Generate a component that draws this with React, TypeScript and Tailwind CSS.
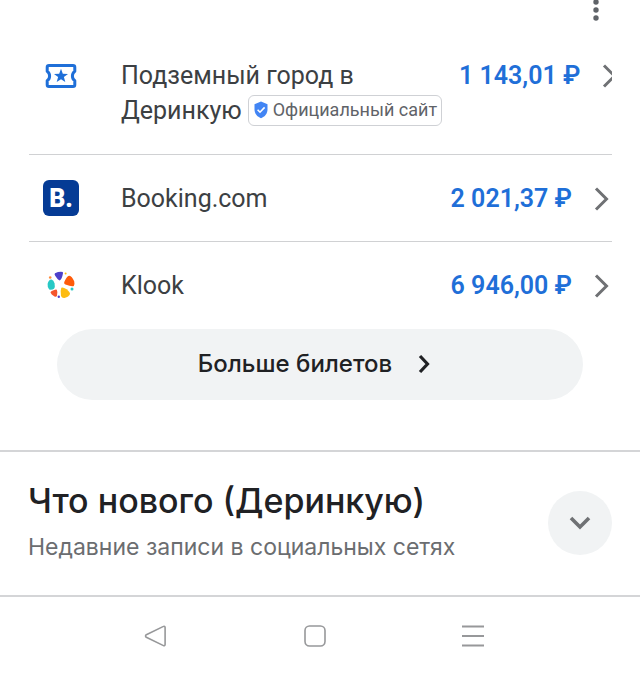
import React from "react";
import clsx from "clsx";

interface TicketOffer {
  id: string;
  name: string;
  price: string;
  official?: boolean;
  icon: React.ReactNode;
}

const TicketIcon = () => (
  <svg width="32" height="26" viewBox="0 0 32 26" fill="none" aria-hidden="true">
    <path
      d="M4 2.5h24a1.8 1.8 0 0 1 1.8 1.8v3.900a6 6 0 0 0 0 9.600v3.900a1.8 1.8 0 0 1-1.8 1.8H4a1.8 1.8 0 0 1-1.8-1.8v-3.900a6 6 0 0 0 0-9.600V4.300A1.8 1.8 0 0 1 4 2.5z"
      stroke="#1f6fd8"
      strokeWidth="3"
      strokeLinejoin="round"
    />
    <path
      d="M16 5.8l1.800 4.900 5.200.2-4.100 3.200 1.400 5-4.300-2.900-4.300 2.900 1.400-5L9 10.900l5.200-.2z"
      fill="#1f6fd8"
    />
  </svg>
);

const BookingIcon = () => (
  <span className="flex h-9 w-9 items-center justify-center rounded-md bg-[#053b95] text-[25px] leading-none font-black text-white">
    B.
  </span>
);

const KlookIcon = () => (
  <svg width="28" height="28" viewBox="0 0 28 28" aria-hidden="true">
    <path d="M8 2.200Q12 .4 15.800 1Q16.400 2 15.400 5Q14 9.400 12.600 9.400Q11.200 9.300 8.200 4.800Q7 2.800 8 2.200z" fill="#4d40ca" />
    <path d="M22.500 4.800Q24.800 5.200 27.200 10.300Q28 14 26.800 15Q25 16 18.400 13.600Q16.400 12.500 17.600 10.200Q20.300 4.700 22.500 4.800z" fill="#ff5b0a" />
    <path d="M4.500 8.400Q6.700 9 7.600 12.500Q8.300 16 7 17.800Q5.400 19 2.200 18.600Q.3 17 .6 13Q1.700 8.100 4.500 8.400z" fill="#27c8c5" />
    <path d="M14.300 16.700Q15.700 15.600 19.700 18.300Q23.200 21.500 23 23Q22 25.900 17.500 26.900Q14.800 27.200 14 25Q13 20 14.300 16.700z" fill="#fdbc12" />
    <path d="M4.800 20Q8.700 17.800 9.800 18.700Q10.900 20.500 10 24.700Q9.400 26.300 7.500 25.500Q4 23.500 3.500 21.600Q3.600 20.500 4.800 20z" fill="#f4552c" />
    <circle cx="3.2" cy="6.5" r="1.3" fill="#ff8a3c" />
    <circle cx="18.6" cy="2.5" r="1" fill="#fdbc12" />
    <circle cx="25" cy="18" r="1.5" fill="#27c8c5" />
    <circle cx="11.8" cy="25.8" r="1.2" fill="#4d40ca" />
  </svg>
);

const ShieldIcon = () => (
  <svg width="14" height="18" viewBox="0 0 14 18" fill="none" className="shrink-0" aria-hidden="true">
    <path d="M7 .5l6.500 2.700v5.300c0 4-2.700 7.400-6.500 8.700C3.200 15.900.5 12.500.5 8.500V3.200z" fill="#4285f4" />
    <path d="M3.600 8.800l2.400 2.400 4.600-4.800" stroke="#fff" strokeWidth="1.6" />
  </svg>
);

const offers: TicketOffer[] = [
  {
    id: "derinkuyu",
    name: "Подземный город в Деринкую",
    price: "1 143,01 ₽",
    official: true,
    icon: <TicketIcon />,
  },
  { id: "booking", name: "Booking.com", price: "2 021,37 ₽", icon: <BookingIcon /> },
  { id: "klook", name: "Klook", price: "6 946,00 ₽", icon: <KlookIcon /> },
];

const OfferRow = ({ offer, last }: { offer: TicketOffer; last: boolean }) => (
  <li className={clsx("overflow-hidden", !last && "border-b border-[#d0d1d3]")}>
    <a
      href={`#${offer.id}`}
      className={clsx(
        "flex items-start pt-[26px] text-[25px] leading-[35px]",
        offer.official ? "pb-6" : "pb-[25px]"
      )}
    >
      <span className="flex h-[35px] w-16 shrink-0 items-center justify-center">{offer.icon}</span>
      <span className={clsx("ml-7 grow text-[#3c4043]", offer.official && "w-[322px] shrink-0")}>
        {offer.name}
        {offer.official && (
          <span className="mb-1 ml-1.5 inline-flex h-[31px] items-center gap-[5px] rounded-md border border-[#cfd1d5] pr-1 pl-[5px] align-middle text-lg leading-none whitespace-nowrap text-[#5f6368]">
            <ShieldIcon />
            Официальный сайт
          </span>
        )}
      </span>
      <span className="ml-4 shrink-0 font-semibold whitespace-nowrap text-[#1f6fd8]">
        {offer.price}
      </span>
      <svg
        width="16"
        height="35"
        viewBox="0 0 16 35"
        fill="none"
        className="mr-0.5 ml-[22px] shrink-0"
        aria-hidden="true"
      >
        <path d="M2 7.5l10.500 10.500L2 28.500" stroke="#6f7174" strokeWidth="3" />
      </svg>
    </a>
  </li>
);

const App = () => {
  return (
    <div className="min-h-screen w-full bg-white font-[Roboto,sans-serif]">
      <header className="flex h-8 justify-end pr-10">
        <button type="button" aria-label="Ещё" className="flex h-[22px] w-2 items-start">
          <svg width="8" height="22" viewBox="0 0 8 22" fill="#5f6368" aria-hidden="true">
            <circle cx="4" cy="2" r="2.7" />
            <circle cx="4" cy="10" r="2.7" />
            <circle cx="4" cy="18" r="2.7" />
          </svg>
        </button>
      </header>

      <main>
        <ul className="mr-7 ml-[29px]">
          {offers.map((offer, index) => (
            <OfferRow key={offer.id} offer={offer} last={index === offers.length - 1} />
          ))}
        </ul>

        <div className="px-[57px] pt-px pb-[50px]">
          <button
            type="button"
            className="flex h-[71px] w-full items-center justify-center gap-[26px] rounded-full bg-[#f1f3f4] font-[Inter,sans-serif] text-2xl font-medium text-[#202124]"
          >
            Больше билетов
            <svg width="24" height="20" viewBox="0 0 24 20" fill="none" aria-hidden="true">
              <path d="M2 2l7.500 8L2 18" stroke="#202124" strokeWidth="3.2" />
            </svg>
          </button>
        </div>

        <section className="flex items-start justify-between border-y-2 border-[#d4d5d7] pt-[27px] pr-7 pb-6 pl-7 font-[Inter,sans-serif]">
          <div>
            <h2 className="text-[34px] leading-[44px] font-medium text-[#202124]">
              Что нового (Деринкую)
            </h2>
            <p className="text-[23px] leading-[48px] text-[#6b6d70]">
              Недавние записи в социальных сетях
            </p>
          </div>
          <button
            type="button"
            aria-label="Развернуть"
            className="mt-3 flex h-16 w-16 shrink-0 items-center justify-center rounded-full bg-[#f1f3f4]"
          >
            <svg width="24" height="16" viewBox="0 0 24 16" fill="none" aria-hidden="true">
              <path d="M3 3l9 9 9-9" stroke="#6f7174" strokeWidth="3.6" />
            </svg>
          </button>
        </section>
      </main>

      <nav className="flex h-[78px] items-center justify-between pr-[156px] pl-36">
        <button type="button" aria-label="Назад">
          <svg width="23" height="24" viewBox="0 0 23 24" fill="none" aria-hidden="true">
            <path
              d="M19.500 2.400L2.300 10.700a1.400 1.400 0 0 0 0 2.500l17.200 8.400a1.100 1.100 0 0 0 1.600-1V3.400a1.100 1.100 0 0 0-1.600-1z"
              stroke="#97989a"
              strokeWidth="1.6"
            />
          </svg>
        </button>
        <button type="button" aria-label="Главный экран">
          <svg width="22" height="22" viewBox="0 0 22 22" fill="none" aria-hidden="true">
            <rect x="1" y="1" width="20" height="20" rx="4.5" stroke="#97989a" strokeWidth="1.6" />
          </svg>
        </button>
        <button type="button" aria-label="Недавние приложения">
          <svg width="22" height="22" viewBox="0 0 22 22" fill="none" aria-hidden="true">
            <path d="M0 1.500h22M0 11h22M0 20.500h22" stroke="#97989a" strokeWidth="1.8" />
          </svg>
        </button>
      </nav>
    </div>
  );
};

export default App;
